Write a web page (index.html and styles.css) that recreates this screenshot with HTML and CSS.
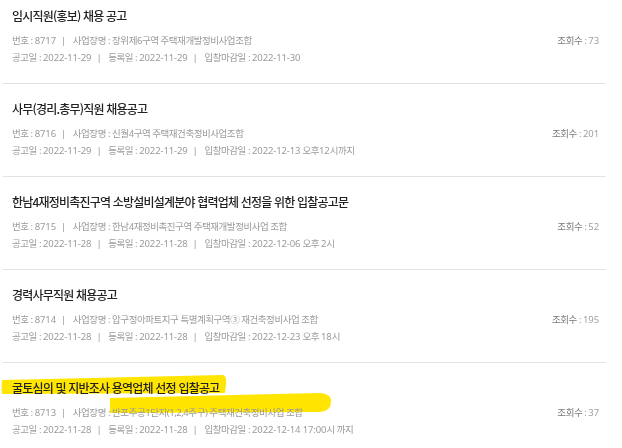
FILE: index.html
```html
<!DOCTYPE html>
<html lang="ko">
<head>
<meta charset="utf-8">
<link rel="stylesheet" href="styles.css">
</head>
<body>
<div class="board">
  <ul class="list">
    <li class="item">
      <div class="title">임시직원(홍보) 채용 공고</div>
      <div class="meta">
        <div class="row row-top">
          <span class="info">번호 : <span class="num">8717</span><span class="sep">|</span>사업장명 : 장위제6구역 주택재개발정비사업조합</span>
          <span class="views"><b>조회수</b> : <span class="num">73</span></span>
        </div>
        <div class="row">
          <span class="info">공고일 : <span class="num">2022-11-29</span><span class="sep">|</span>등록일 : <span class="num">2022-11-29</span><span class="sep">|</span>입찰마감일 : <span class="num">2022-11-30</span></span>
        </div>
      </div>
    </li>
    <li class="item">
      <div class="title">사무(경리.총무)직원 채용공고</div>
      <div class="meta">
        <div class="row row-top">
          <span class="info">번호 : <span class="num">8716</span><span class="sep">|</span>사업장명 : 신월4구역 주택재건축정비사업조합</span>
          <span class="views"><b>조회수</b> : <span class="num">201</span></span>
        </div>
        <div class="row">
          <span class="info">공고일 : <span class="num">2022-11-29</span><span class="sep">|</span>등록일 : <span class="num">2022-11-29</span><span class="sep">|</span>입찰마감일 : <span class="num">2022-12-13</span> 오후<span class="num">12</span>시까지</span>
        </div>
      </div>
    </li>
    <li class="item">
      <div class="title">한남4재정비촉진구역 소방설비설계분야 협력업체 선정을 위한 입찰공고문</div>
      <div class="meta">
        <div class="row row-top">
          <span class="info">번호 : <span class="num">8715</span><span class="sep">|</span>사업장명 : 한남4재정비촉진구역 주택재개발정비사업 조합</span>
          <span class="views"><b>조회수</b> : <span class="num">52</span></span>
        </div>
        <div class="row">
          <span class="info">공고일 : <span class="num">2022-11-28</span><span class="sep">|</span>등록일 : <span class="num">2022-11-28</span><span class="sep">|</span>입찰마감일 : <span class="num">2022-12-06</span> 오후 <span class="num">2</span>시</span>
        </div>
      </div>
    </li>
    <li class="item">
      <div class="title">경력사무직원 채용공고</div>
      <div class="meta">
        <div class="row row-top">
          <span class="info">번호 : <span class="num">8714</span><span class="sep">|</span>사업장명 : 압구정아파트지구 특별계획구역③ 재건축정비사업 조합</span>
          <span class="views"><b>조회수</b> : <span class="num">195</span></span>
        </div>
        <div class="row">
          <span class="info">공고일 : <span class="num">2022-11-28</span><span class="sep">|</span>등록일 : <span class="num">2022-11-28</span><span class="sep">|</span>입찰마감일 : <span class="num">2022-12-23</span> 오후 <span class="num">18</span>시</span>
        </div>
      </div>
    </li>
    <li class="item item-marked">
      <svg class="mark mark-title" viewBox="0 0 226 20" preserveAspectRatio="none" aria-hidden="true">
        <path d="M1 5 L222 0 Q226 1 225 9 L224 18 L1 19 Q0 12 1 5 Z" fill="#ffe500"/>
      </svg>
      <svg class="mark mark-meta" viewBox="0 0 222 21" preserveAspectRatio="none" aria-hidden="true">
        <path d="M0 5 L210 0 Q222 1 221 9 Q221 18 210 19 L0 20 Z" fill="#ffe500"/>
      </svg>
      <div class="title">굴토심의 및 지반조사 용역업체 선정 입찰공고</div>
      <div class="meta">
        <div class="row row-top">
          <span class="info">번호 : <span class="num">8713</span><span class="sep">|</span>사업장명 : 반포주공1단지(1,2,4주구) 주택재건축정비사업 조합</span>
          <span class="views"><b>조회수</b> : <span class="num">37</span></span>
        </div>
        <div class="row">
          <span class="info">공고일 : <span class="num">2022-11-28</span><span class="sep">|</span>등록일 : <span class="num">2022-11-28</span><span class="sep">|</span>입찰마감일 : <span class="num">2022-12-14 17:00</span>시 까지</span>
        </div>
      </div>
    </li>
  </ul>
</div>
</body>
</html>
```

FILE: styles.css
```css
* { box-sizing: border-box; }
html, body { margin: 0; padding: 0; background: #fff; }
body {
  font-family: "Noto Sans CJK KR", "Noto Sans", sans-serif;
  width: 622px;
  height: 448px;
  overflow: hidden;
}
.board {
  padding: 0 16px 0 3px;
  margin-top: -9px;
}
.list {
  list-style: none;
  margin: 0;
  padding: 0;
}
.item {
  position: relative;
  padding: 15px 7px 17px 9px;
  border-bottom: 1px solid #e3e3e3;
}
.title {
  position: relative;
  font-size: 12px;
  line-height: 20px;
  font-weight: 500;
  color: #222;
  letter-spacing: -0.8px;
  white-space: nowrap;
}
.meta {
  position: relative;
  margin-top: 6px;
  font-family: "Noto Sans", "Noto Sans CJK KR", sans-serif;
  font-size: 9.5px;
  color: #9a9a9a;
  letter-spacing: -0.45px;
}
.row {
  display: flex;
  justify-content: space-between;
  line-height: 17px;
  white-space: nowrap;
}
.num {
  letter-spacing: -0.12px;
}
.sep {
  margin: 0 7px 0 5px;
}
.views {
  color: #a0a0a0;
}
.views b {
  font-weight: 400;
  color: #7a7a7a;
}
.mark {
  position: absolute;
  mix-blend-mode: multiply;
}
.mark-title {
  left: -2px;
  top: 12px;
  width: 226px;
  height: 20px;
}
.mark-meta {
  left: 107px;
  top: 30px;
  width: 222px;
  height: 21px;
}
```
